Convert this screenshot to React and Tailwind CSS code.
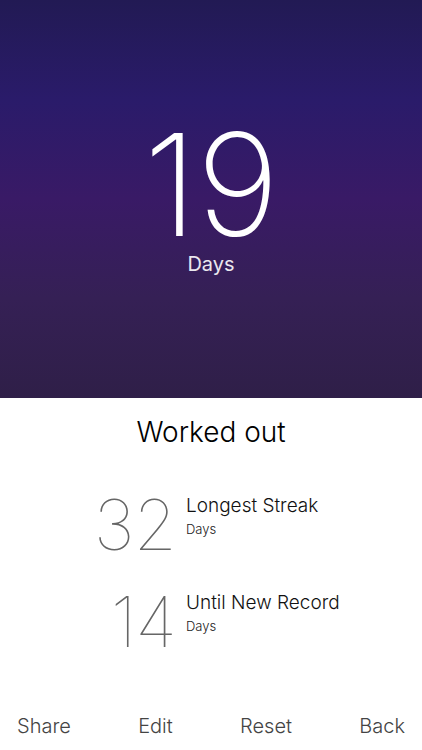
import React from "react";

const font = { fontFamily: "Inter, 'Helvetica Neue', Arial, sans-serif" };

function Stat({ value, label }) {
  return (
    <div className="grid grid-cols-[176px_1fr] items-start gap-[10px]">
      <div className="-mt-[5px] text-right text-[70px] font-thin leading-none text-[#666666] tracking-[-1px]">
        {value}
      </div>
      <div className="flex flex-col">
        <div className="text-[19px] font-light leading-[22px] text-[#111111]">{label}</div>
        <div className="text-[13px] font-light leading-[16px] text-[#222222] mt-[4px]">Days</div>
      </div>
    </div>
  );
}

export default function App() {
  return (
    <div className="w-[422px] h-[750px] flex flex-col bg-white overflow-hidden" style={font}>
      <div className="h-[398px] bg-[linear-gradient(180deg,#221a54_0%,#2a1b6a_25%,#391a66_50%,#352055_75%,#2f1f48_100%)] flex flex-col items-center pt-[130px]">
        <div className="text-[142px] font-extralight leading-[108px] text-white tracking-[-1px]">19</div>
        <div className="mt-[16px] text-[20px] font-normal text-white/90 leading-none">Days</div>
      </div>
      <div className="flex-1 flex flex-col">
        <div className="pt-[17px] text-center text-[28px] font-light text-black leading-[34px]">Worked out</div>
        <div className="mt-[46px] flex flex-col gap-[32px]">
          <Stat value="32" label="Longest Streak" />
          <Stat value="14" label="Until New Record" />
        </div>
        <div className="mt-auto pb-[12px] flex justify-between px-[17px] text-[20px] font-light text-[#444444] leading-[24px]">
          <span>Share</span>
          <span>Edit</span>
          <span>Reset</span>
          <span>Back</span>
        </div>
      </div>
    </div>
  );
}
